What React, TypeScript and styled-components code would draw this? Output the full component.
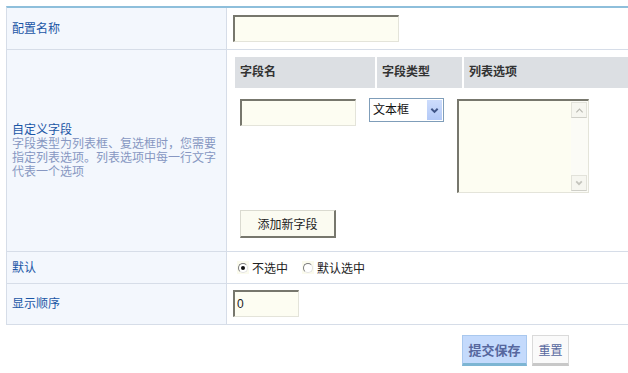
import React from "react";
import styled, { createGlobalStyle } from "styled-components";

const GlobalStyle = createGlobalStyle`
  html, body {
    margin: 0;
    padding: 0;
    overflow: hidden;
    background: #fff;
  }
  body {
    font-family: "Liberation Sans", "Noto Sans CJK SC", sans-serif;
    font-size: 12px;
    color: #333;
  }
`;

const Chevron: React.FC<{ dir: "up" | "down"; color: string; size?: number }> = ({
  dir,
  color,
  size = 9,
}) => (
  <svg width={size} height={size} viewBox="0 0 10 10">
    <path
      d={dir === "down" ? "M1.5 3 L5 6.5 L8.5 3" : "M1.5 7 L5 3.5 L8.5 7"}
      fill="none"
      stroke={color}
      strokeWidth={dir === "down" ? 2.2 : 1.3}
    />
  </svg>
);

const App: React.FC = () => {
  return (
    <>
      <GlobalStyle />
      <Page>
        <FormTable>
          <Row>
            <LabelCell>配置名称</LabelCell>
            <FieldCell $pad="7px 5px 7px 6px">
              <TextInput $w={166} />
            </FieldCell>
          </Row>

          <Row>
            <LabelCell>
              <LabelBlock>
                <LabelTitle>自定义字段</LabelTitle>
                <LabelHint>
                  字段类型为列表框、复选框时，您需要指定列表选项。列表选项中每一行文字代表一个选项
                </LabelHint>
              </LabelBlock>
            </LabelCell>
            <FieldCell $pad="7px 0 13px 8px">
              <HeadRow>
                <HeadCell $w="140px">字段名</HeadCell>
                <HeadCell $w="85px">字段类型</HeadCell>
                <HeadCell $w="auto" $grow>列表选项</HeadCell>
              </HeadRow>
              <FieldRow>
                <TextInput $w={116} />
                <SelectBox>
                  <Select defaultValue="text">
                    <option value="text">文本框</option>
                    <option value="list">列表框</option>
                    <option value="check">复选框</option>
                  </Select>
                  <SelectArrow>
                    <Chevron dir="down" color="#3f5587" />
                  </SelectArrow>
                </SelectBox>
                <AreaBox>
                  <Area />
                  <ScrollTrack>
                    <ScrollBtn>
                      <Chevron dir="up" color="#b9b9b2" />
                    </ScrollBtn>
                    <ScrollBtn>
                      <Chevron dir="down" color="#c4c4bd" size={8} />
                    </ScrollBtn>
                  </ScrollTrack>
                </AreaBox>
              </FieldRow>
              <AddRow>
                <AddButton type="button">添加新字段</AddButton>
              </AddRow>
            </FieldCell>
          </Row>

          <Row>
            <LabelCell>默认</LabelCell>
            <RadioCell>
              <RadioOption>
                <RadioBox>
                  <RadioCircle $checked />
                </RadioBox>
                不选中
              </RadioOption>
              <RadioOption>
                <RadioBox>
                  <RadioCircle />
                </RadioBox>
                默认选中
              </RadioOption>
            </RadioCell>
          </Row>

          <Row>
            <LabelCell>显示顺序</LabelCell>
            <FieldCell $pad="6px 5px 7px 6px">
              <TextInput $w={66} defaultValue="0" />
            </FieldCell>
          </Row>
        </FormTable>

        <Actions>
          <SubmitButton type="button">提交保存</SubmitButton>
          <ResetButton type="button">重置</ResetButton>
        </Actions>
      </Page>
    </>
  );
};

export default App;

const Page = styled.div`
  padding: 6px 0 0 6px;
`;

const FormTable = styled.div`
  width: 622px;
  border-top: 2px solid #8ebfdb;
  border-left: 1px solid #d6dde8;
`;

const Row = styled.div`
  display: grid;
  grid-template-columns: 220px 1fr;
  border-bottom: 1px solid #d6dde8;
`;

const LabelCell = styled.div`
  display: flex;
  align-items: center;
  background: #f3f7fd;
  border-right: 1px solid #d6dde8;
  padding: 0 6px 0 5px;
  color: #1a56a6;
  line-height: 14px;
`;

const LabelBlock = styled.div`
  display: flex;
  flex-direction: column;
`;

const LabelTitle = styled.span`
  color: #1a56a6;
  line-height: 14px;
`;

const LabelHint = styled.span`
  color: #8797c2;
  line-height: 14px;
`;

const FieldCell = styled.div<{ $pad: string }>`
  padding: ${(p) => p.$pad};
`;

const TextInput = styled.input<{ $w: number }>`
  display: block;
  box-sizing: border-box;
  width: ${(p) => p.$w}px;
  height: 27px;
  padding: 0 2px;
  border-style: solid;
  border-width: 2px 1px 1px 2px;
  border-color: #77776d #e4e4da #e4e4da #77776d;
  background: #fdfdf2;
  font-family: "Liberation Sans", "Noto Sans CJK SC", sans-serif;
  font-size: 12px;
  color: #222;
  outline: none;
`;

const HeadRow = styled.div`
  display: flex;
  gap: 2px;
`;

const HeadCell = styled.div<{ $w: string; $grow?: boolean }>`
  width: ${(p) => p.$w};
  flex: ${(p) => (p.$grow ? "1" : "none")};
  height: 31px;
  line-height: 31px;
  padding-left: 5px;
  box-sizing: border-box;
  background: #dcdfe3;
  font-weight: bold;
  color: #333;
`;

const FieldRow = styled.div`
  display: flex;
  align-items: flex-start;
  gap: 13px;
  margin-top: 11px;
  padding-left: 5px;
`;

const SelectBox = styled.div`
  display: flex;
  align-items: center;
  box-sizing: border-box;
  width: 75px;
  height: 24px;
  margin-top: -1px;
  border: 1px solid #7f9db9;
  background: #fff;
`;

const Select = styled.select`
  flex: 1;
  min-width: 0;
  height: 100%;
  padding: 0 0 0 3px;
  border: none;
  background: transparent;
  appearance: none;
  font-family: "Liberation Sans", "Noto Sans CJK SC", sans-serif;
  font-size: 12px;
  color: #111;
  outline: none;
`;

const SelectArrow = styled.div`
  display: flex;
  align-items: center;
  justify-content: center;
  width: 15px;
  height: 20px;
  margin-right: 1px;
  background: linear-gradient(#cddcfc, #b3c9f7);
`;

const AreaBox = styled.div`
  display: flex;
  box-sizing: border-box;
  width: 132px;
  height: 94px;
  border-style: solid;
  border-width: 2px 1px 1px 2px;
  border-color: #77776d #e4e4da #e4e4da #77776d;
  background: #fdfdf2;
`;

const Area = styled.textarea`
  flex: 1;
  min-width: 0;
  border: none;
  background: transparent;
  resize: none;
  outline: none;
  overflow: hidden;
`;

const ScrollTrack = styled.div`
  display: flex;
  flex-direction: column;
  justify-content: space-between;
  width: 16px;
  padding: 1px 1px 1px 0;
  background: #fbfbf6;
`;

const ScrollBtn = styled.div`
  display: flex;
  align-items: center;
  justify-content: center;
  height: 14px;
  border: 1px solid #e2e2da;
  border-bottom-color: #cfcfc8;
  background: #f6f6f0;
`;

const AddRow = styled.div`
  margin-top: 17px;
  padding-left: 5px;
`;

const AddButton = styled.button`
  box-sizing: border-box;
  width: 96px;
  height: 28px;
  padding: 0;
  border-style: solid;
  border-width: 1px 2px 2px 1px;
  border-color: #dadad0 #77776d #77776d #dadad0;
  background: #fbfbf1;
  font-family: "Liberation Sans", "Noto Sans CJK SC", sans-serif;
  font-size: 12px;
  color: #222;
`;

const RadioCell = styled.div`
  display: flex;
  align-items: center;
  gap: 14px;
  height: 31px;
  padding-left: 10px;
  color: #222;
`;

const RadioOption = styled.label`
  display: flex;
  align-items: center;
  gap: 3px;
`;

const RadioBox = styled.span`
  display: flex;
  align-items: center;
  justify-content: center;
  width: 12px;
  height: 13px;
  background: #fbfbee;
`;

const RadioCircle = styled.span<{ $checked?: boolean }>`
  position: relative;
  box-sizing: border-box;
  width: 10px;
  height: 10px;
  border-radius: 50%;
  border: 1px solid;
  border-color: #7a7a7a #e2e2e2 #e2e2e2 #7a7a7a;
  background: #fff;

  &::after {
    content: "";
    display: ${(p) => (p.$checked ? "block" : "none")};
    position: absolute;
    left: 2px;
    top: 2px;
    width: 4px;
    height: 4px;
    border-radius: 50%;
    background: #111;
  }
`;

const Actions = styled.div`
  display: flex;
  gap: 5px;
  padding: 10px 0 0 456px;
`;

const SubmitButton = styled.button`
  box-sizing: border-box;
  width: 65px;
  height: 31px;
  padding: 0;
  border: 1px solid #a9c8ee;
  border-bottom: 3px solid #7db5d3;
  background: #c4dafc;
  font-family: "Liberation Sans", "Noto Sans CJK SC", sans-serif;
  font-size: 13px;
  font-weight: bold;
  color: #56679e;
`;

const ResetButton = styled.button`
  box-sizing: border-box;
  width: 37px;
  height: 31px;
  padding: 0;
  border: 1px solid #dadada;
  border-bottom: 3px solid #c8c8c8;
  background: #fafafa;
  font-family: "Liberation Sans", "Noto Sans CJK SC", sans-serif;
  font-size: 12px;
  color: #56679e;
`;
